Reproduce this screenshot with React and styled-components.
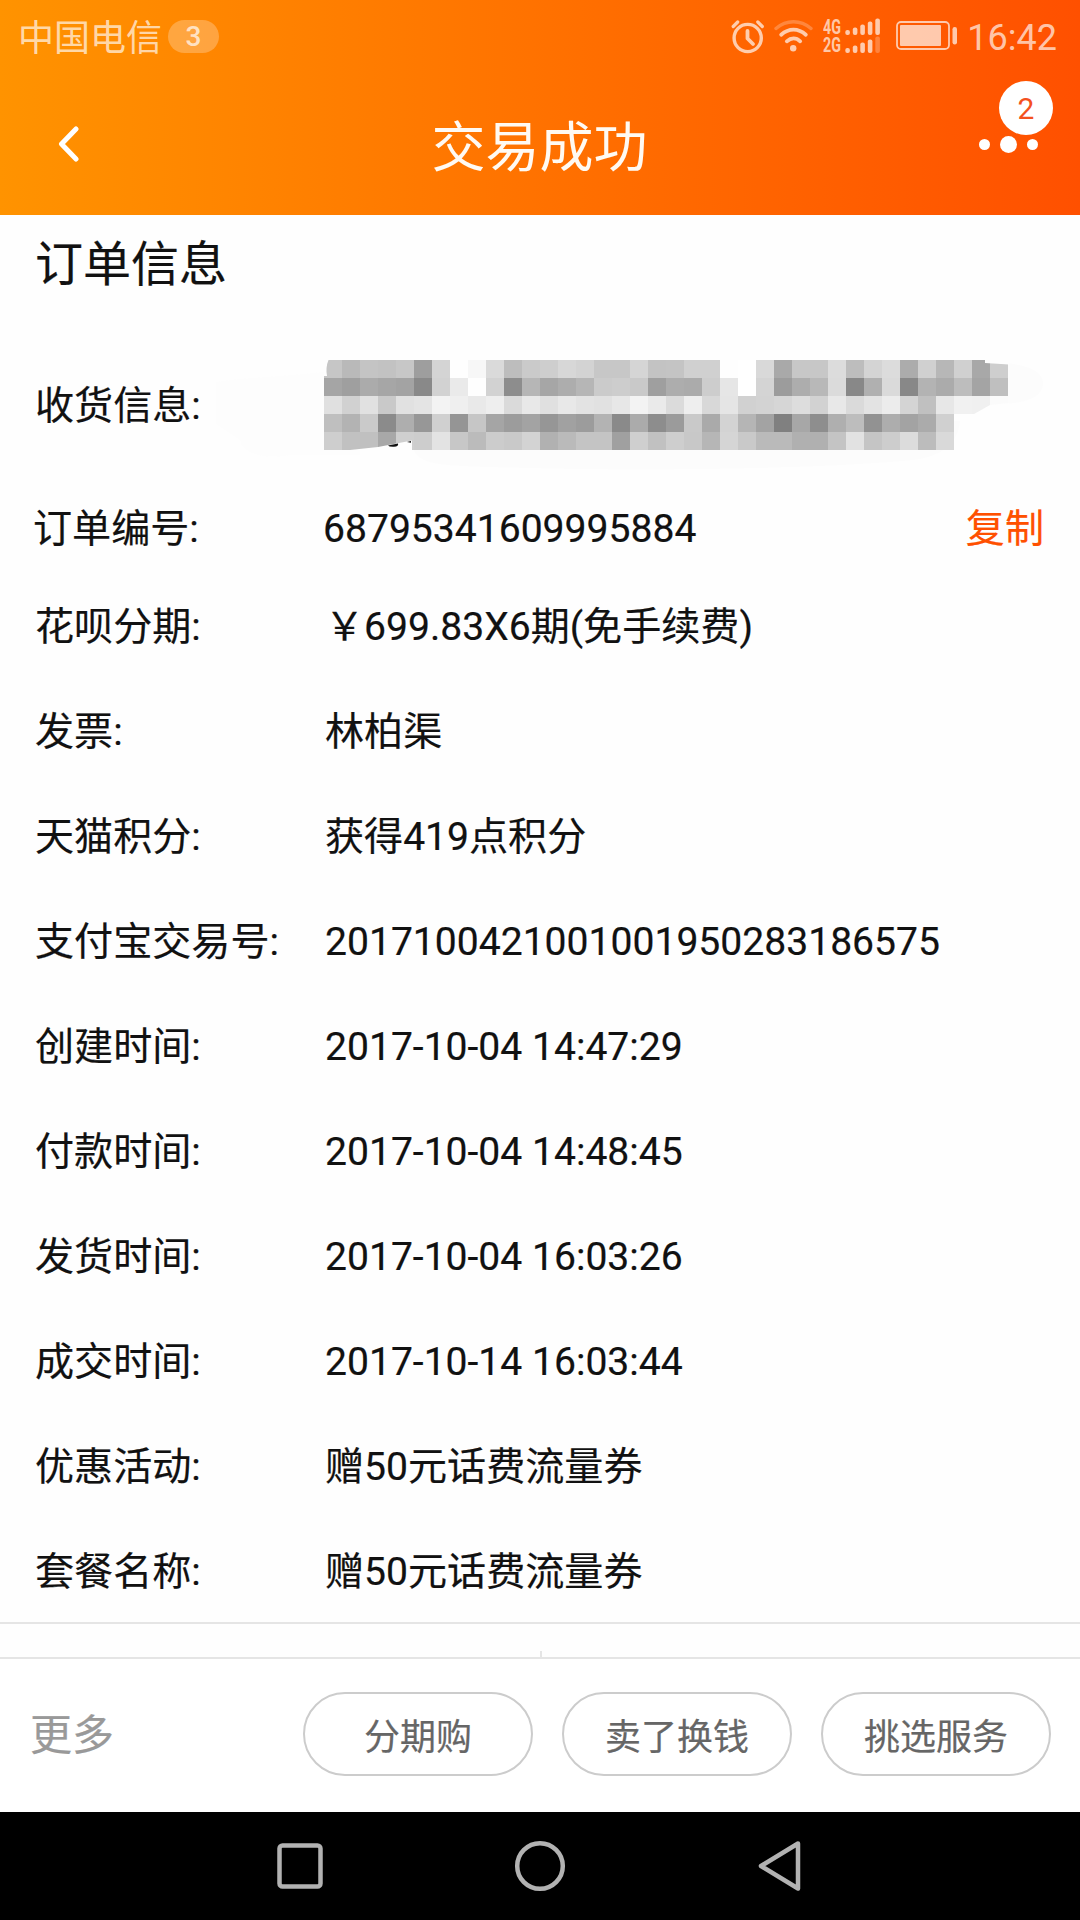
import React from 'react';
import styled, { createGlobalStyle } from 'styled-components';

const GlobalStyle = createGlobalStyle`
  * {
    box-sizing: border-box;
  }

  body {
    margin: 0;
    background: #fff;
    font-family: Roboto, "Noto Sans CJK SC", sans-serif;
    color: #111;
  }
`;

const Screen = styled.div`
  display: flex;
  flex-direction: column;
  width: 1080px;
  height: 1920px;
  overflow: hidden;
  background: #fefefe;
`;

const Header = styled.header`
  height: 215px;
  flex: none;
  background: linear-gradient(90deg, #ff9300 0%, #ff5000 100%);
  color: #fff;
`;

const StatusBar = styled.div`
  display: flex;
  align-items: center;
  height: 74px;
  padding: 0 23px 0 18px;

  svg {
    flex: none;
    display: block;
  }
`;

const Carrier = styled.span`
  padding-top: 3px;
  font-size: 36px;
  line-height: 74px;
  color: rgba(255, 255, 255, 0.68);
`;

const Count = styled.span`
  width: 51px;
  height: 33px;
  margin: 0 auto 1px 6px;
  border-radius: 17px;
  background: rgba(255, 255, 255, 0.25);
  color: rgba(255, 255, 255, 0.7);
  font-size: 28px;
  font-weight: 500;
  line-height: 34px;
  text-align: center;
`;

const StatusIcons = styled.div`
  display: flex;
  align-items: center;
  gap: 9px;
  height: 74px;
  padding-bottom: 2px;
  color: rgba(255, 255, 255, 0.68);
`;

const Clock = styled.span`
  margin-left: 9px;
  padding-top: 1px;
  font-size: 36px;
  line-height: 74px;
  color: rgba(255, 255, 255, 0.68);
`;

const NavBar = styled.div`
  display: grid;
  grid-template-columns: 140px 1fr 140px;
  align-items: center;
  height: 141px;
`;

const BackButton = styled.div`
  padding: 0 0 1px 57px;

  svg {
    display: block;
  }
`;

const Title = styled.h1`
  margin: 0;
  padding-top: 8px;
  font-size: 54px;
  font-weight: 400;
  line-height: 80px;
  text-align: center;
  text-indent: -1px;
  color: #fffaf3;
`;

const More = styled.div`
  position: relative;
  display: flex;
  align-items: center;
  gap: 10px;
  padding-left: 39px;
`;

const Dot = styled.i`
  width: ${p => p.size}px;
  height: ${p => p.size}px;
  border-radius: 50%;
  background: #fff;
`;

const Badge = styled.span`
  position: absolute;
  left: 59px;
  bottom: 18px;
  width: 54px;
  height: 54px;
  border-radius: 50%;
  background: #fff;
  color: #f4511e;
  font-size: 30px;
  line-height: 55px;
  text-align: center;
`;

const Content = styled.main`
  height: 1407px;
  flex: none;
  overflow: hidden;
  -webkit-text-stroke: 0.2px #111;
`;

const SectionTitle = styled.h2`
  margin: 0 0 16px;
  padding: 2px 0 0 35px;
  font-size: 48px;
  font-weight: 400;
  line-height: 96px;
`;

const Row = styled.div`
  display: flex;
  align-items: center;
  height: ${p => p.height || 105}px;
  padding-left: ${p => p.indent || 35}px;
  padding-right: 36px;
  font-size: 39.1px;
  line-height: 58px;
  white-space: nowrap;
`;

const Label = styled.span`
  flex: none;
  width: 290px;
`;

const Value = styled.span`
  flex: 1;
`;

const CopyLink = styled.span`
  color: #ff5000;
  -webkit-text-stroke-color: #ff5000;
`;

const Masked = styled.svg`
  flex: none;
  display: block;
  margin: 0 0 2px -109px;
`;

const Divider = styled.div`
  flex: none;
  height: 2px;
  background: #e5e5e5;
`;

const Gap = styled.div`
  display: flex;
  align-items: flex-end;
  flex: none;
  height: 33px;
  padding-left: 540px;
`;

const Tick = styled.i`
  width: 2px;
  height: 6px;
  background: #e5e5e5;
`;

const Footer = styled.footer`
  display: flex;
  align-items: center;
  gap: 29px;
  flex: none;
  height: 155px;
  padding: 0 29px 3px 30px;
  border-top: 2px solid #e5e5e5;
  background: #fff;
`;

const MoreText = styled.span`
  margin-right: auto;
  padding-top: 4px;
  font-size: 42px;
  line-height: 60px;
  color: #999;
  -webkit-text-stroke: 0.2px #999;
`;

const Pill = styled.button`
  width: 230px;
  height: 84px;
  padding: 0 0 1px;
  border: 2px solid #ccc;
  border-radius: 42px;
  background: #fff;
  color: #666;
  font-family: inherit;
  font-size: 36px;
  -webkit-text-stroke: 0.2px #666;
`;

const SystemNav = styled.nav`
  display: flex;
  align-items: center;
  justify-content: center;
  gap: 190px;
  flex: 1;
  background: #000;
`;

const AlarmIcon = () => (
  <svg width="34" height="36" viewBox="0 0 34 36" fill="none" stroke="currentColor" strokeLinecap="round">
    <circle cx="16.7" cy="20" r="13.6" strokeWidth="3.4" />
    <path d="M16.5 13v7.5l5.5 5.5" strokeWidth="3.8" strokeLinejoin="round" />
    <path d="M2.2 8.5l4.5-4.5M31.3 8.5l-4.5-4.5" strokeWidth="3.2" />
  </svg>
);

const WifiIcon = () => (
  <svg width="40" height="36" viewBox="0 0 40 36" fill="none" stroke="currentColor" strokeLinecap="round">
    <path d="M2 10.5C12.5 1.5 26.5 1.5 37 10.5" strokeWidth="3.4" opacity="0.35" />
    <path d="M7.2 16.7C14.8 10 24.2 10 31.8 16.7" strokeWidth="3.8" />
    <path d="M12.8 23.3C17 19.5 22.2 19.5 26.2 23.3" strokeWidth="3.8" />
    <circle cx="19.2" cy="30.2" r="3.2" fill="currentColor" stroke="none" />
  </svg>
);

const Signal = styled.div`
  display: grid;
  grid-template-columns: 22px 36px;
  grid-template-rows: 18px 18px;
  align-items: center;
  height: 37px;
  font-size: 21px;
  font-weight: 700;
  line-height: 18px;
`;

const Network = styled.span`
  width: 26px;
  transform: scaleX(0.68);
  transform-origin: left;
`;

const bars = [5, 7.5, 10.5, 13.5, 16.5];

const SignalBars = ({ level }) => (
  <svg width="36" height="18" viewBox="0 0 36 18" fill="currentColor">
    {bars.map((h, i) => (
      <rect key={h} x={0.3 + i * 7.5} y={17 - h} width="4.6" height={h} rx="2" opacity={i < level ? 1 : 0.35} />
    ))}
  </svg>
);

const BatteryIcon = styled(({ className }) => (
  <svg className={className} width="62" height="30" viewBox="0 0 62 30" fill="currentColor">
    <rect x="1" y="1" width="52" height="27" rx="4" fill="none" stroke="currentColor" strokeWidth="1.8" />
    <rect x="4" y="4" width="41" height="21" rx="1" />
    <rect x="56.5" y="6" width="4.5" height="17.5" rx="2.2" />
  </svg>
))`
  margin-left: 6px;
`;

// grey level of every block, two hex digits each
const mosaic = [
  'c6b9c4c2c79ed4fef7dabdcaced7d3c7c7d5c3c4d0d0feffd9a9c7c7dcbdd4dcacd0b7d0a8ce',
  'a59faba6a389d2eafed28db6a6adb6cbcdc99fadabcde6ffd49cadb8db88b0da88b3abbda4bf',
  'e0d1e1c9e1e4f3efe9eedae8e0e8e3e1e7f3eadbeed8e5d1d3d6ddd2e8dae3ecd4c0e7f1f0fb',
  'bfb3ca8bae97d095c6a59ca396a19cb38aab8d9bc9aad3b5a380a78eafbd92ada3abd0',
  'cec1c0a8cfcde3c7bbccc9d3b1bac4c4a0cfc1cec8b6d5c9babab0b0c4e2c5cddcbcd9',
].map(line => line.match(/../g));

const MaskedAddress = () => (
  <Masked width="828" height="150" viewBox="216 330 828 150">
    <path d="M216 382C260 376 310 376 360 366V455H290C260 460 242 452 240 440L216 424Z" fill="#fdfdfd" />
    <g fill="#fcfcfc">
      <path d="M412 440c0 20 14 24 50 26 150 6 330 4 440-5 30-2 55-10 58-40H420z" />
      <path d="M985 363h20c22 2 38 8 38 20s-12 20-42 21l-25 10h-20z" />
    </g>
    <g shapeRendering="crispEdges">
      {mosaic.map((line, y) =>
        line.map((c, x) => (
          <rect key={`${x}-${y}`} x={324 + x * 18} y={360 + y * 18} width="18" height="18" fill={`#${c}${c}${c}`} />
        ))
      )}
    </g>
    {/* edges the brush missed */}
    <g fill="#fefefe">
      <path d="M324 360h4.5q-3 7-1.5 16h-3z" />
      <path d="M985 360h24v4.5l-24-1.5z" />
      <path d="M1009 396v7l-19 2-16 9h35z" />
      <path d="M350 450l28-3 34-6.5v9.5z" />
    </g>
    <path d="M388 445.5l10-2q1 3-4 3.2t-6-1.2zM407 442l4-1v1.8z" fill="#111" />
  </Masked>
);

const details = [
  ['花呗分期:', '￥699.83X6期(免手续费)'],
  ['发票:', '林柏渠'],
  ['天猫积分:', '获得419点积分'],
  ['支付宝交易号:', '2017100421001001950283186575'],
  ['创建时间:', '2017-10-04 14:47:29'],
  ['付款时间:', '2017-10-04 14:48:45'],
  ['发货时间:', '2017-10-04 16:03:26'],
  ['成交时间:', '2017-10-14 16:03:44'],
  ['优惠活动:', '赠50元话费流量券'],
  ['套餐名称:', '赠50元话费流量券'],
];

const StatusArea = () => (
  <StatusBar>
    <Carrier>中国电信</Carrier>
    <Count>3</Count>
    <StatusIcons>
      <AlarmIcon />
      <WifiIcon />
      <Signal>
        <Network>4G</Network>
        <SignalBars level={5} />
        <Network>2G</Network>
        <SignalBars level={4} />
      </Signal>
      <BatteryIcon />
    </StatusIcons>
    <Clock>16:42</Clock>
  </StatusBar>
);

const App = () => {
  return (
    <Screen>
      <GlobalStyle />
      <Header>
        <StatusArea />
        <NavBar>
          <BackButton>
            <svg width="22" height="36" viewBox="0 0 22 36" fill="none" stroke="#fff" strokeWidth="5" strokeLinecap="round" strokeLinejoin="round">
              <path d="M19 3L4.5 18l14.5 15" />
            </svg>
          </BackButton>
          <Title>交易成功</Title>
          <More>
            <Dot size={11} />
            <Dot size={17} />
            <Dot size={11} />
            <Badge>2</Badge>
          </More>
        </NavBar>
      </Header>
      <Content>
        <SectionTitle>订单信息</SectionTitle>
        <Row height={154}>
          <Label>收货信息:</Label>
          <MaskedAddress />
        </Row>
        <Row height={91} indent={33}>
          <Label>订单编号:</Label>
          <Value>68795341609995884</Value>
          <CopyLink>复制</CopyLink>
        </Row>
        {details.map(([label, value]) => (
          <Row key={label}>
            <Label>{label}</Label>
            <Value>{value}</Value>
          </Row>
        ))}
      </Content>
      <Divider />
      <Gap>
        <Tick />
      </Gap>
      <Footer>
        <MoreText>更多</MoreText>
        <Pill>分期购</Pill>
        <Pill>卖了换钱</Pill>
        <Pill>挑选服务</Pill>
      </Footer>
      <SystemNav>
        <svg width="48" height="52" viewBox="0 0 48 52" fill="none" stroke="#b2b2b2" strokeWidth="4.5">
          <rect x="3.5" y="5.5" width="41" height="41" rx="3" />
        </svg>
        <svg width="52" height="52" viewBox="0 0 52 52" fill="none" stroke="#b2b2b2" strokeWidth="4.5">
          <circle cx="26" cy="26" r="22.8" />
        </svg>
        <svg width="48" height="52" viewBox="0 0 48 52" fill="none" stroke="#b2b2b2" strokeWidth="4.5" strokeLinejoin="round">
          <path d="M42 3.5L5 26l37 22.5z" />
        </svg>
      </SystemNav>
    </Screen>
  );
};

export default App;
